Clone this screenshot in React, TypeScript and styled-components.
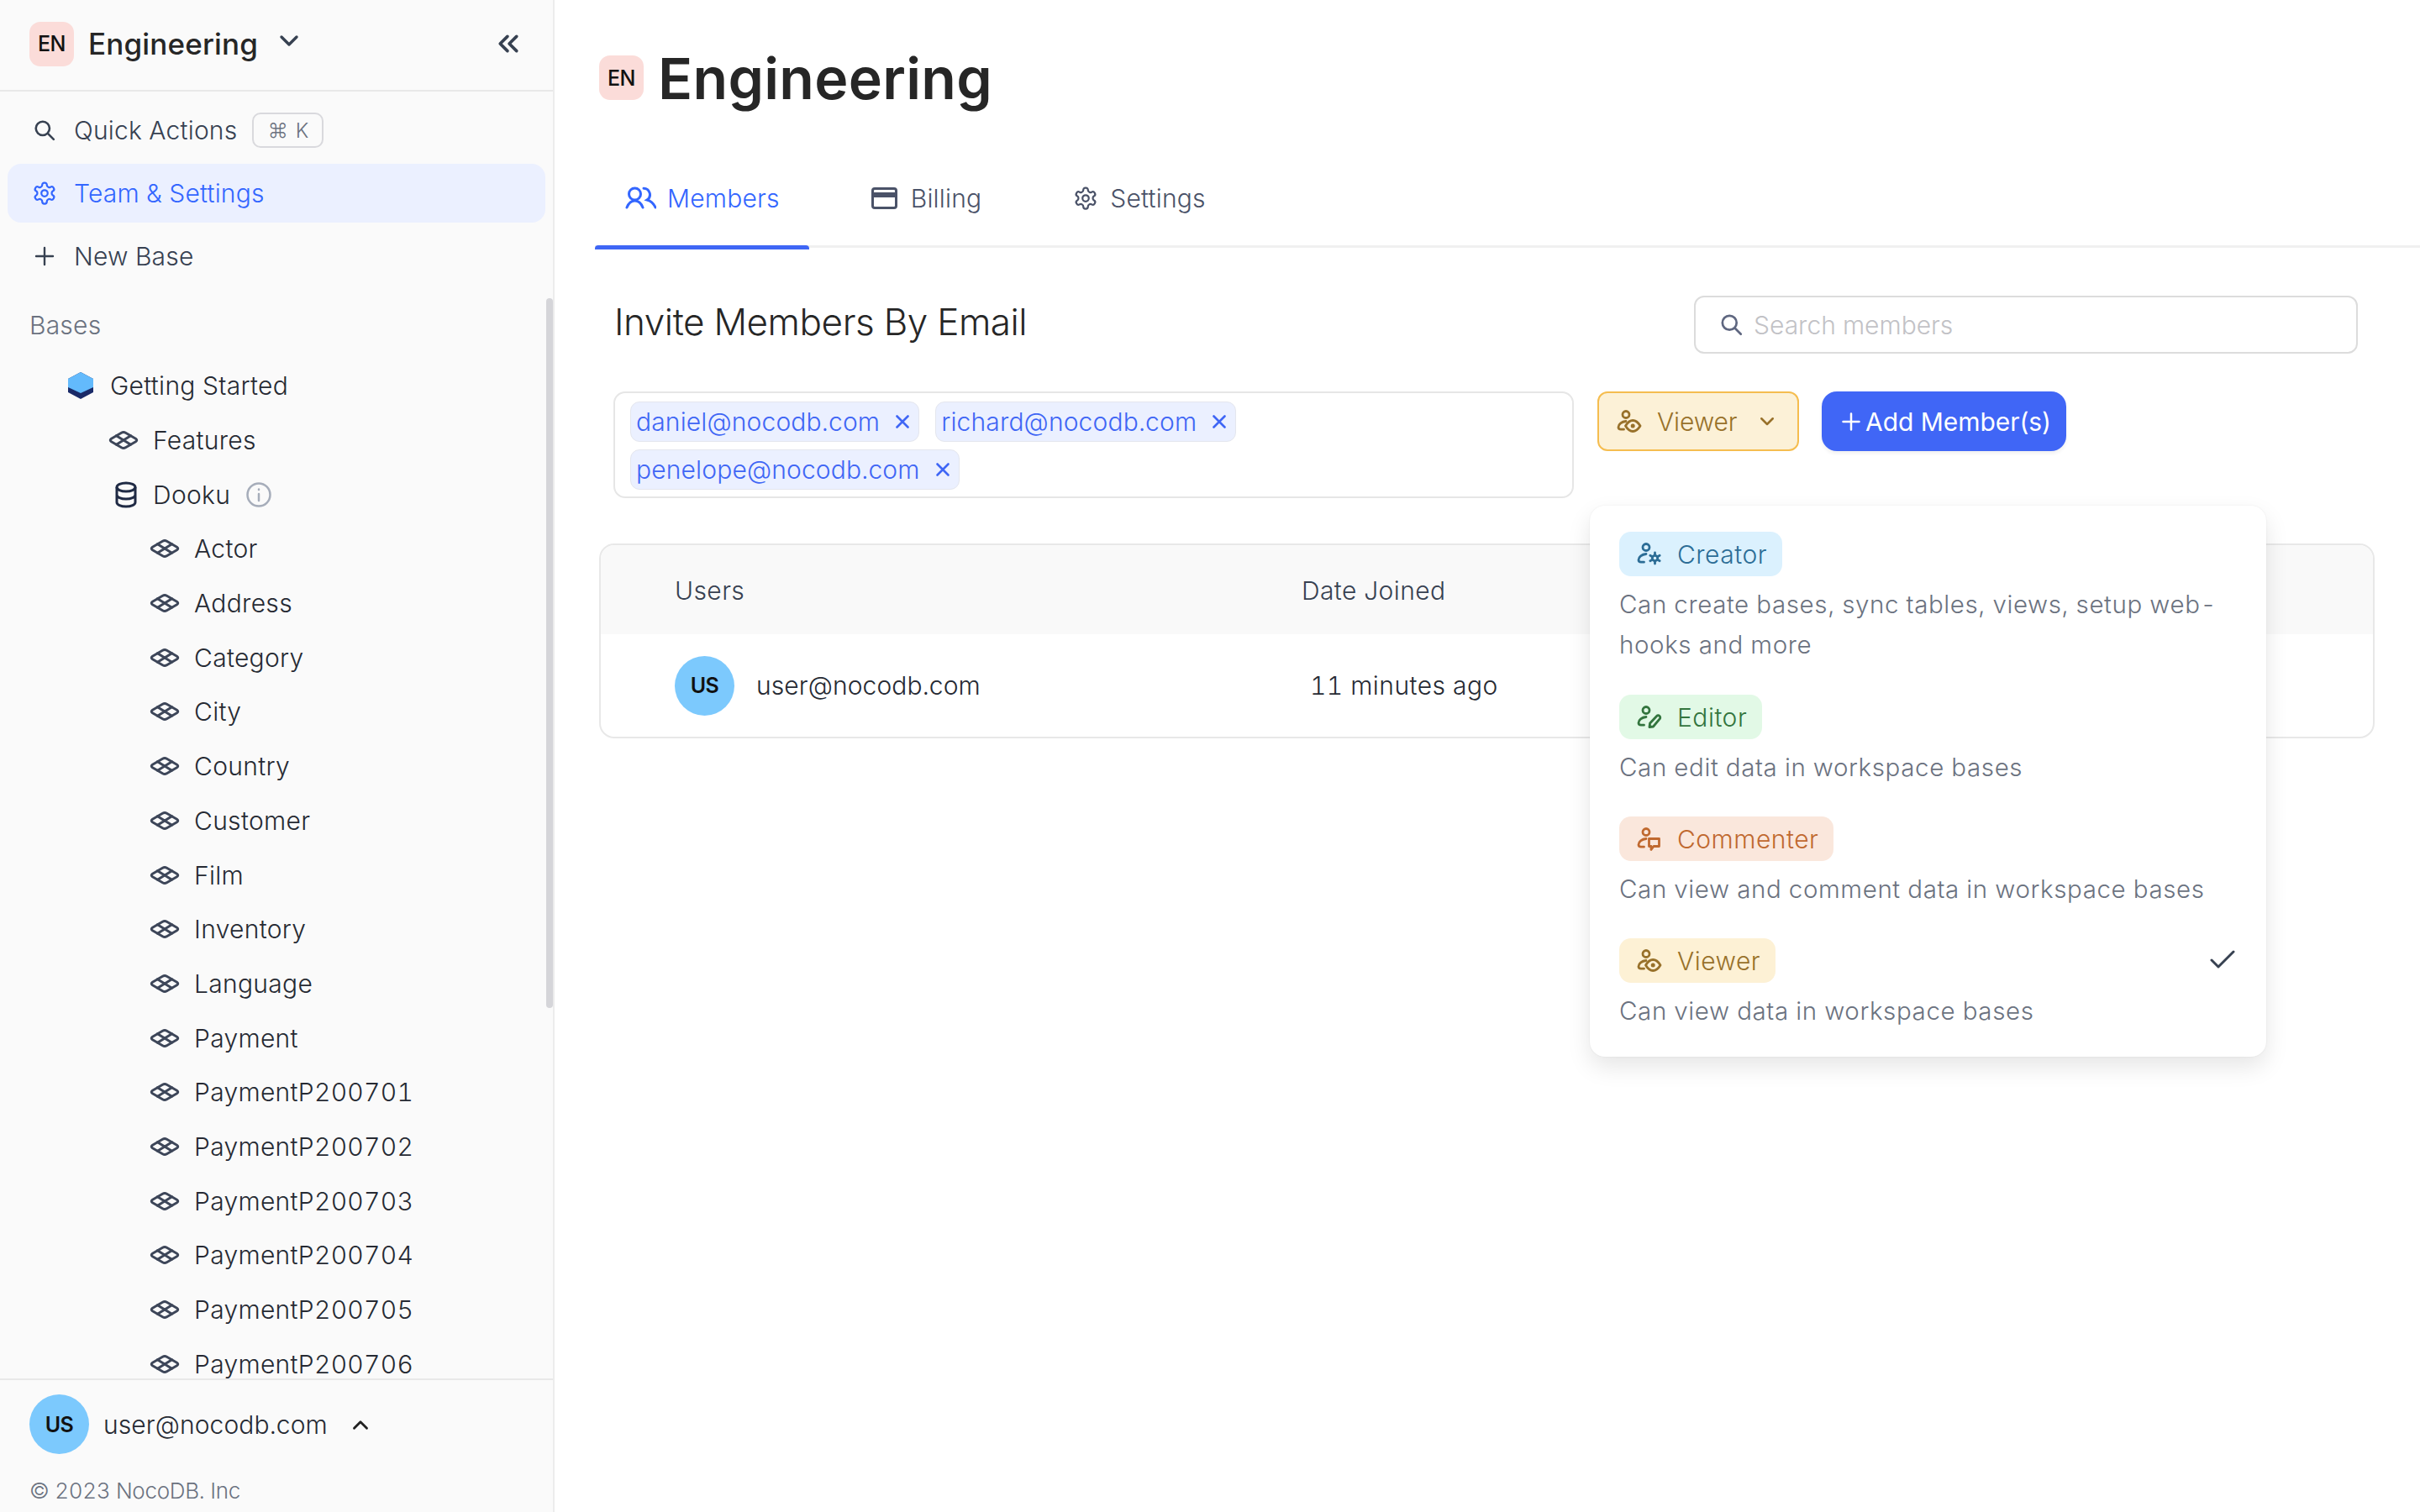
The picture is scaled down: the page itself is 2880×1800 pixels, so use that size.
import React from "react";
import styled, { createGlobalStyle } from "styled-components";

const GlobalStyle = createGlobalStyle`
  html, body {
    margin: 0;
    padding: 0;
    background: #ffffff;
  }
  * {
    box-sizing: border-box;
  }
  body {
    font-family: Inter, "Noto Sans", sans-serif;
    font-weight: 350;
    font-variant-numeric: tabular-nums;
    color: #1f2937;
  }
`;

const Page = styled.div`
  display: flex;
  width: 2880px;
  height: 1800px;
  overflow: hidden;
`;

const Sidebar = styled.aside`
  width: 660px;
  height: 100%;
  flex-shrink: 0;
  display: flex;
  flex-direction: column;
  background: #fafafa;
  border-right: 2px solid #ececec;
`;

const SideHeader = styled.div`
  height: 109px;
  flex-shrink: 0;
  display: flex;
  align-items: center;
  padding: 0 40px 3px 35px;
  border-bottom: 2px solid #e8e8e8;
`;

const Avatar = styled.div`
  width: 53px;
  height: 53px;
  flex-shrink: 0;
  display: flex;
  align-items: center;
  justify-content: center;
  border-radius: 13px;
  background: #fbdcd9;
  color: #111111;
  font-size: 25px;
  font-weight: 500;
  letter-spacing: -0.5px;
`;

const WorkspaceName = styled.div`
  margin-left: 17px;
  font-size: 35px;
  font-weight: 500;
  letter-spacing: 0.15px;
  color: #262626;
`;

const HeaderChevron = styled.div`
  margin-left: 25px;
  margin-top: -6px;
  display: flex;
  color: #374151;
`;

const Collapse = styled.div`
  margin-left: auto;
  display: flex;
  color: #374151;
`;

const MenuBlock = styled.div`
  flex-shrink: 0;
  padding: 11px 9px 0;
  height: 236px;
`;

const MenuItem = styled.div<{ $active?: boolean }>`
  height: 70px;
  margin-bottom: 5px;
  display: flex;
  align-items: center;
  padding-left: 28px;
  border-radius: 16px;
  font-size: 30px;
  letter-spacing: 0.2px;
  background: ${(p) => (p.$active ? "#ebf0ff" : "transparent")};
  color: ${(p) => (p.$active ? "#3366ff" : "#374151")};
`;

const MenuIcon = styled.span`
  width: 32px;
  display: flex;
  justify-content: center;
  margin-right: 19px;
`;

const Kbd = styled.span`
  margin-left: 18px;
  width: 85px;
  height: 42px;
  display: flex;
  align-items: center;
  justify-content: center;
  gap: 9px;
  border: 2px solid #d9d9dd;
  border-radius: 10px;
  font-size: 24px;
  letter-spacing: 0;
  color: #6b7280;
`;

const Tree = styled.div`
  position: relative;
  flex: 1;
  min-height: 0;
  overflow: hidden;
  padding-top: 22px;
`;

const Thumb = styled.div`
  position: absolute;
  top: 10px;
  right: 0;
  width: 8px;
  height: 845px;
  border-radius: 4px;
  background: #d5d5d9;
`;

const SectionLabel = styled.div`
  padding-left: 35px;
  margin-bottom: 20px;
  height: 40px;
  line-height: 40px;
  font-size: 30px;
  letter-spacing: 0.2px;
  color: #6b7280;
`;

const TreeRow = styled.div<{ $depth: number }>`
  height: 64.7px;
  display: flex;
  align-items: center;
  padding-left: ${(p) => [81, 129, 178][p.$depth]}px;
  font-size: 30px;
  letter-spacing: 0.3px;
  color: #262a33;
`;

const TreeIcon = styled.span<{ $width: number }>`
  width: ${(p) => p.$width}px;
  display: flex;
  flex-shrink: 0;
`;

const SideFooter = styled.div`
  flex-shrink: 0;
  height: 159px;
  padding: 17px 0 0 35px;
  border-top: 2px solid #e8e8e8;
`;

const FooterUser = styled.div`
  display: flex;
  align-items: center;
  font-size: 30px;
  letter-spacing: 0.1px;
  color: #262a33;
`;

const RoundAvatar = styled.div`
  width: 71px;
  height: 71px;
  flex-shrink: 0;
  display: flex;
  align-items: center;
  justify-content: center;
  border-radius: 50%;
  background: #7cc9fd;
  color: #111111;
  font-size: 25px;
  font-weight: 600;
  letter-spacing: -0.5px;
`;

const FooterEmail = styled.span`
  margin: 0 29px 0 17px;
`;

const Copyright = styled.div`
  margin-top: 28px;
  font-size: 26px;
  letter-spacing: -0.3px;
  color: #6b7280;
`;

const Main = styled.main`
  flex: 1;
  min-width: 0;
  padding-left: 48px;
`;

const TitleRow = styled.div`
  display: flex;
  align-items: center;
  height: 53px;
  margin: 66px 0 0 5px;
`;

const PageTitle = styled.h1`
  margin: 0 0 0 17px;
  font-size: 68px;
  font-weight: 600;
  letter-spacing: 0.3px;
  color: #262626;
`;

const TabBar = styled.div`
  display: flex;
  gap: 38px;
  height: 124px;
  margin-top: 52px;
  border-bottom: 3px solid #f0f0f0;
`;

const Tab = styled.div<{ $active?: boolean }>`
  position: relative;
  display: flex;
  align-items: center;
  height: 124px;
  padding: 6px 35px 0 36px;
  font-size: 30px;
  letter-spacing: 0.2px;
  color: ${(p) => (p.$active ? "#3366ff" : "#4a5268")};
  ${(p) =>
    p.$active &&
    `&::after {
      content: "";
      position: absolute;
      left: 0;
      right: 0;
      bottom: -2px;
      height: 5px;
      border-radius: 4px 4px 0 0;
      background: #3f66f5;
    }`}
`;

const TabIcon = styled.span<{ $gap: number }>`
  display: flex;
  margin-right: ${(p) => p.$gap}px;
`;

const TopRow = styled.div`
  display: flex;
  align-items: center;
  justify-content: space-between;
  margin-top: 57px;
  padding: 0 74px 0 23px;
`;

const InviteTitle = styled.h2`
  margin: 0 0 8px;
  font-size: 44px;
  font-weight: 350;
  letter-spacing: -0.45px;
  color: #262626;
`;

const SearchBox = styled.div`
  width: 790px;
  height: 69px;
  display: flex;
  align-items: center;
  gap: 13px;
  padding-left: 29px;
  border: 2px solid #dcdcdc;
  border-radius: 12px;
  color: #c2c2c6;
  font-size: 30px;
  letter-spacing: 0;
`;

const InviteRow = styled.div`
  display: flex;
  align-items: flex-start;
  margin: 45px 0 0 22px;
`;

const EmailBox = styled.div`
  width: 1143px;
  height: 127px;
  display: flex;
  flex-wrap: wrap;
  align-content: flex-start;
  gap: 9px 19px;
  padding: 10px 18px;
  border: 2px solid #e6e6e6;
  border-radius: 14px;
`;

const Chip = styled.div`
  height: 48px;
  display: flex;
  align-items: center;
  padding: 0 10px 0 6px;
  border: 1.5px solid #e4e6ee;
  border-radius: 11px;
  background: #ebf0ff;
  color: #3f66f5;
  font-size: 30px;
  letter-spacing: 0.15px;
`;

const ChipClose = styled.span`
  display: flex;
  margin-left: 18px;
`;

const SelectWrap = styled.div`
  position: relative;
  margin-left: 28px;
`;

const RoleSelect = styled.div`
  width: 240px;
  height: 71px;
  display: flex;
  align-items: center;
  padding-left: 21px;
  border: 2px solid #f5bd4f;
  border-radius: 12px;
  background: #fcf1d7;
  color: #98712a;
  font-size: 30px;
  letter-spacing: -0.1px;
`;

const SelectLabel = styled.span`
  margin: 0 26px 0 18px;
`;

const AddButton = styled.button`
  width: 291px;
  height: 71px;
  margin-left: 27px;
  display: flex;
  align-items: center;
  gap: 6px;
  padding: 0 0 0 24px;
  border: none;
  border-radius: 18px;
  background: #4066f6;
  box-shadow: 0 3px 4px rgba(0, 0, 0, 0.06);
  color: #ffffff;
  font-family: inherit;
  font-size: 30px;
  font-weight: 400;
  letter-spacing: -0.05px;
  white-space: nowrap;
`;

const RoleMenu = styled.div`
  position: absolute;
  top: 136px;
  left: -9px;
  z-index: 5;
  width: 805px;
  height: 656px;
  padding: 31px 35px 0;
  background: #ffffff;
  border-radius: 18px;
  box-shadow: 0 0 2px rgba(0, 0, 0, 0.08), 0 12px 28px rgba(0, 0, 0, 0.1);
`;

const RoleOption = styled.div<{ $gap: number }>`
  position: relative;
  margin-bottom: ${(p) => p.$gap}px;
`;

const RolePill = styled.div<{ $bg: string; $fg: string }>`
  display: inline-flex;
  align-items: center;
  height: 53px;
  padding: 0 18px 0 21px;
  border-radius: 14px;
  background: ${(p) => p.$bg};
  color: ${(p) => p.$fg};
  font-size: 30px;
  letter-spacing: 0.5px;
`;

const PillLabel = styled.span`
  margin-left: 18px;
`;

const RoleDesc = styled.div`
  margin-top: 9px;
  line-height: 48px;
  font-size: 29.5px;
  letter-spacing: 0.6px;
  color: #6b7280;
`;

const Check = styled.span`
  position: absolute;
  top: 13px;
  right: 2px;
  display: flex;
  color: #374151;
`;

const Table = styled.div`
  width: 2113px;
  height: 232px;
  margin: 54px 0 0 5px;
  border: 2px solid #e8e8e8;
  border-radius: 18px;
  overflow: hidden;
`;

const TableHead = styled.div`
  height: 106px;
  display: grid;
  grid-template-columns: 746px 1fr;
  align-items: center;
  padding: 2px 0 0 88px;
  background: #f9f9f9;
  color: #374151;
  font-size: 30px;
  letter-spacing: 0.4px;
`;

const TableRow = styled.div`
  height: 122px;
  display: grid;
  grid-template-columns: 746px 1fr;
  align-items: center;
  padding-left: 88px;
  color: #262a33;
  font-size: 30px;
  letter-spacing: 0.1px;
`;

const UserCell = styled.div`
  display: flex;
  align-items: center;
  gap: 26px;
`;

const JoinedCell = styled.div`
  padding-left: 10px;
  letter-spacing: 0.45px;
`;

const GridTableIcon = () => (
  <svg width="36" height="24" viewBox="0 0 36 24" fill="none" stroke="#3d4659" strokeWidth="3" strokeLinejoin="round" strokeLinecap="round">
    <path d="M15.5 3.200Q18 1.800 20.500 3.200L32.500 10.200Q35 12 32.500 13.800L20.500 20.800Q18 22.200 15.500 20.800L3.500 13.800Q1 12 3.500 10.200Z" />
    <path d="M9.500 6.700 26.500 17.300M26.500 6.700 9.500 17.300" />
  </svg>
);

const GearIcon = ({ size = 32, color = "currentColor" }: { size?: number; color?: string }) => (
  <svg width={size} height={size} viewBox="0 0 24 24" fill="none" stroke={color} strokeWidth="1.8" strokeLinecap="round" strokeLinejoin="round">
    <path d="M12.220 2h-.44a2 2 0 0 0-2 2v.18a2 2 0 0 1-1 1.730l-.43.25a2 2 0 0 1-2 0l-.15-.08a2 2 0 0 0-2.730.73l-.22.38a2 2 0 0 0 .73 2.730l.15.1a2 2 0 0 1 1 1.720v.51a2 2 0 0 1-1 1.740l-.15.09a2 2 0 0 0-.73 2.730l.22.38a2 2 0 0 0 2.730.73l.15-.08a2 2 0 0 1 2 0l.43.25a2 2 0 0 1 1 1.730V20a2 2 0 0 0 2 2h.44a2 2 0 0 0 2-2v-.18a2 2 0 0 1 1-1.730l.43-.25a2 2 0 0 1 2 0l.15.08a2 2 0 0 0 2.730-.73l.22-.39a2 2 0 0 0-.73-2.730l-.15-.08a2 2 0 0 1-1-1.740v-.5a2 2 0 0 1 1-1.740l.15-.09a2 2 0 0 0 .73-2.730l-.22-.38a2 2 0 0 0-2.730-.73l-.15.08a2 2 0 0 1-2 0l-.43-.25a2 2 0 0 1-1-1.730V4a2 2 0 0 0-2-2z" />
    <circle cx="12" cy="12" r="3" />
  </svg>
);

const SearchIcon = ({ size = 28, color = "currentColor" }: { size?: number; color?: string }) => (
  <svg width={size} height={size} viewBox="0 0 24 24" fill="none" stroke={color} strokeWidth="2.4" strokeLinecap="round">
    <circle cx="10" cy="10" r="7.500" />
    <path d="m15.800 15.800 6.200 6.200" />
  </svg>
);

const Chevron = ({ up, size = 24, color = "currentColor", width = 3.4 }: { up?: boolean; size?: number; color?: string; width?: number }) => (
  <svg width={size} height={size} viewBox="0 0 24 24" fill="none" stroke={color} strokeWidth={width} strokeLinecap="round" strokeLinejoin="round">
    <path d={up ? "M3 17 12 8l9 9" : "M3 7l9 9 9-9"} />
  </svg>
);

const CloseIcon = () => (
  <svg width="18" height="18" viewBox="0 0 18 18" fill="none" stroke="currentColor" strokeWidth="2.6" strokeLinecap="round">
    <path d="M2.500 2.500 15.500 15.500M15.500 2.500 2.500 15.500" />
  </svg>
);

type Badge = "gear" | "pen" | "chat" | "eye";

const RoleIcon = ({ badge }: { badge: Badge }) => (
  <svg width="30" height="28" viewBox="0 0 30 28" fill="none" stroke="currentColor" strokeWidth="2.800" strokeLinecap="round" strokeLinejoin="round">
    <circle cx="11" cy="5.500" r="4" />
    <path d="M11 13.500c-5 .4-9 3.500-9 7 0 1.800 1.200 2.700 3 2.700h3.500" />
    {badge === "gear" && (
      <>
        <circle cx="21.500" cy="18.500" r="3.200" />
        <path d="M21.500 12v2.500M21.500 22.500V25M15.800 15.300l2.200 1.200M25 20.500l2.200 1.200M15.800 21.700l2.200-1.200M25 16.500l2.200-1.200" />
      </>
    )}
    {badge === "pen" && <path d="M15 25.500l.6-4.500 8-8.500a2.400 2.400 0 0 1 3.500 3.400L19.500 25z" />}
    {badge === "chat" && <path d="M14.500 13.500h12v9h-6.500l-3 4v-4h-2.500z" />}
    {badge === "eye" && (
      <>
        <path d="M10.500 19c2.500-4.200 5.500-6.500 8.700-6.500s6.300 2.300 8.800 6.500c-2.500 4.200-5.600 6.500-8.800 6.500s-6.200-2.300-8.700-6.500z" />
        <circle cx="19.200" cy="19" r="2.500" fill="currentColor" stroke="none" />
      </>
    )}
  </svg>
);

const TableEntry = ({ depth, name }: { depth: number; name: string }) => (
  <TreeRow $depth={depth}>
    <TreeIcon $width={53}>
      <GridTableIcon />
    </TreeIcon>
    {name}
  </TreeRow>
);

const tables = [
  "Actor",
  "Address",
  "Category",
  "City",
  "Country",
  "Customer",
  "Film",
  "Inventory",
  "Language",
  "Payment",
  "PaymentP200701",
  "PaymentP200702",
  "PaymentP200703",
  "PaymentP200704",
  "PaymentP200705",
  "PaymentP200706",
];

const roles: { name: string; badge: Badge; bg: string; fg: string; desc: string; gap: number; selected?: boolean }[] = [
  { name: "Creator", badge: "gear", bg: "#dbf1fe", fg: "#2c6d96", desc: "Can create bases, sync tables, views, setup web-hooks and more", gap: 36 },
  { name: "Editor", badge: "pen", bg: "#e2f9e6", fg: "#33753e", desc: "Can edit data in workspace bases", gap: 35 },
  { name: "Commenter", badge: "chat", bg: "#fae7dc", fg: "#c0692f", desc: "Can view and comment data in workspace bases", gap: 35 },
  { name: "Viewer", badge: "eye", bg: "#fdf1d5", fg: "#98712a", desc: "Can view data in workspace bases", gap: 0, selected: true },
];

export default function App() {
  return (
    <>
      <GlobalStyle />
      <Page>
        <Sidebar>
          <SideHeader>
            <Avatar>EN</Avatar>
            <WorkspaceName>Engineering</WorkspaceName>
            <HeaderChevron>
              <Chevron size={24} />
            </HeaderChevron>
            <Collapse>
              <svg width="26" height="26" viewBox="0 0 24 24" fill="none" stroke="currentColor" strokeWidth="3.4" strokeLinecap="round" strokeLinejoin="round">
                <path d="M11 4 3 12l8 8M21 4l-8 8 8 8" />
              </svg>
            </Collapse>
          </SideHeader>
          <MenuBlock>
            <MenuItem>
              <MenuIcon>
                <SearchIcon size={26} />
              </MenuIcon>
              Quick Actions
              <Kbd>
                <span>⌘</span>
                <span>K</span>
              </Kbd>
            </MenuItem>
            <MenuItem $active>
              <MenuIcon>
                <GearIcon size={30} />
              </MenuIcon>
              Team &amp; Settings
            </MenuItem>
            <MenuItem>
              <MenuIcon>
                <svg width="24" height="24" viewBox="0 0 24 24" fill="none" stroke="currentColor" strokeWidth="2.400" strokeLinecap="round">
                  <path d="M12 2v20M2 12h20" />
                </svg>
              </MenuIcon>
              New Base
            </MenuItem>
          </MenuBlock>
          <Tree>
            <Thumb />
            <SectionLabel>Bases</SectionLabel>
            <TreeRow $depth={0}>
              <TreeIcon $width={50}>
                <svg width="30" height="32" viewBox="0 0 30 32">
                  <path d="M15 0 30 8v16l-15 8-15-8V8z" fill="#1a2a68" />
                  <path d="M15 0 30 8v10l-15 7-15-7V8z" fill="#63bafc" />
                </svg>
              </TreeIcon>
              Getting Started
            </TreeRow>
            <TableEntry depth={1} name="Features" />
            <TreeRow $depth={1}>
              <TreeIcon $width={53}>
                <svg width="30" height="32" viewBox="0 0 30 32" fill="none" stroke="#1f2a44" strokeWidth="3" style={{ marginLeft: 6 }}>
                  <ellipse cx="15" cy="7" rx="11" ry="5" />
                  <path d="M4 7v18c0 3 5 5 11 5s11-2 11-5V7M4 16c0 3 5 5 11 5s11-2 11-5" />
                </svg>
              </TreeIcon>
              Dooku
              <svg width="32" height="32" viewBox="0 0 32 32" fill="none" stroke="#a6adba" strokeWidth="2.500" strokeLinecap="round" style={{ marginLeft: 18 }}>
                <circle cx="16" cy="16" r="13.500" />
                <path d="M16 15v8M16 9.500v.5" />
              </svg>
            </TreeRow>
            {tables.map((name) => (
              <TableEntry key={name} depth={2} name={name} />
            ))}
          </Tree>
          <SideFooter>
            <FooterUser>
              <RoundAvatar>US</RoundAvatar>
              <FooterEmail>user@nocodb.com</FooterEmail>
              <Chevron up size={20} color="#222222" />
            </FooterUser>
            <Copyright>© 2023 NocoDB. Inc</Copyright>
          </SideFooter>
        </Sidebar>
        <Main>
          <TitleRow>
            <Avatar>EN</Avatar>
            <PageTitle>Engineering</PageTitle>
          </TitleRow>
          <TabBar>
            <Tab $active>
              <TabIcon $gap={13}>
                <svg width="37" height="28" viewBox="0 0 37 28" fill="none" stroke="currentColor" strokeWidth="3" strokeLinecap="round">
                  <circle cx="11.500" cy="9" r="7" />
                  <path d="M2 25c2-5 5.500-8 9.500-8s7.500 3 9.500 8M22 2.200a7.500 7.500 0 0 1 4 13.800c4.500 1.200 8 4.500 10 9" />
                </svg>
              </TabIcon>
              Members
            </Tab>
            <Tab>
              <TabIcon $gap={16}>
                <svg width="31" height="26" viewBox="0 0 31 26">
                  <rect x="1.500" y="1.500" width="28" height="23" rx="2.500" fill="none" stroke="currentColor" strokeWidth="3" />
                  <rect x="1.500" y="6" width="28" height="6" fill="currentColor" />
                </svg>
              </TabIcon>
              Billing
            </Tab>
            <Tab>
              <TabIcon $gap={14}>
                <GearIcon size={30} />
              </TabIcon>
              Settings
            </Tab>
          </TabBar>
          <TopRow>
            <InviteTitle>Invite Members By Email</InviteTitle>
            <SearchBox>
              <SearchIcon size={27} color="#5f6780" />
              Search members
            </SearchBox>
          </TopRow>
          <InviteRow>
            <EmailBox>
              {["daniel@nocodb.com", "richard@nocodb.com", "penelope@nocodb.com"].map((email) => (
                <Chip key={email}>
                  {email}
                  <ChipClose>
                    <CloseIcon />
                  </ChipClose>
                </Chip>
              ))}
            </EmailBox>
            <SelectWrap>
              <RoleSelect>
                <RoleIcon badge="eye" />
                <SelectLabel>Viewer</SelectLabel>
                <Chevron size={18} />
              </RoleSelect>
              <RoleMenu>
                {roles.map((role) => (
                  <RoleOption key={role.name} $gap={role.gap}>
                    <RolePill $bg={role.bg} $fg={role.fg}>
                      <RoleIcon badge={role.badge} />
                      <PillLabel>{role.name}</PillLabel>
                    </RolePill>
                    <RoleDesc>{role.desc}</RoleDesc>
                    {role.selected && (
                      <Check>
                        <svg width="30" height="24" viewBox="0 0 30 24" fill="none" stroke="currentColor" strokeWidth="3" strokeLinecap="round" strokeLinejoin="round">
                          <path d="M2 13l8 8L28 3" />
                        </svg>
                      </Check>
                    )}
                  </RoleOption>
                ))}
              </RoleMenu>
            </SelectWrap>
            <AddButton>
              <svg width="22" height="22" viewBox="0 0 22 22" fill="none" stroke="currentColor" strokeWidth="2.500" strokeLinecap="round">
                <path d="M11 1.500v19M1.500 11h19" />
              </svg>
              Add Member(s)
            </AddButton>
          </InviteRow>
          <Table>
            <TableHead>
              <div>Users</div>
              <div>Date Joined</div>
            </TableHead>
            <TableRow>
              <UserCell>
                <RoundAvatar>US</RoundAvatar>
                user@nocodb.com
              </UserCell>
              <JoinedCell>11 minutes ago</JoinedCell>
            </TableRow>
          </Table>
        </Main>
      </Page>
    </>
  );
}
